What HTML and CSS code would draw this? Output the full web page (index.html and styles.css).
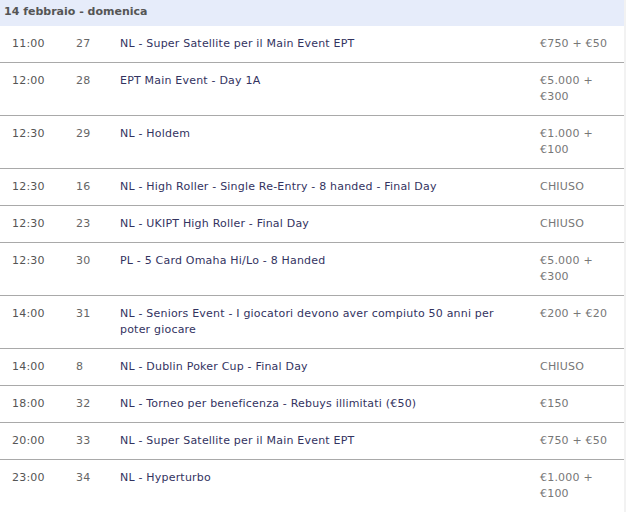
FILE: index.html
```html
<!DOCTYPE html>
<html lang="it">
<head>
<meta charset="utf-8">
<link rel="stylesheet" href="styles.css">
</head>
<body>
<div class="schedule">
  <div class="day">14 febbraio - domenica</div>
  <div class="row"><div class="time">11:00</div><div class="num">27</div><div class="event">NL - Super Satellite per il Main Event EPT</div><div class="price">€750 + €50</div></div>
  <div class="row"><div class="time">12:00</div><div class="num">28</div><div class="event">EPT Main Event - Day 1A</div><div class="price">€5.000 + €300</div></div>
  <div class="row"><div class="time">12:30</div><div class="num">29</div><div class="event">NL - Holdem</div><div class="price">€1.000 + €100</div></div>
  <div class="row"><div class="time">12:30</div><div class="num">16</div><div class="event">NL - High Roller - Single Re-Entry - 8 handed - Final Day</div><div class="price">CHIUSO</div></div>
  <div class="row"><div class="time">12:30</div><div class="num">23</div><div class="event">NL - UKIPT High Roller - Final Day</div><div class="price">CHIUSO</div></div>
  <div class="row"><div class="time">12:30</div><div class="num">30</div><div class="event">PL - 5 Card Omaha Hi/Lo - 8 Handed</div><div class="price">€5.000 + €300</div></div>
  <div class="row"><div class="time">14:00</div><div class="num">31</div><div class="event">NL - Seniors Event - I giocatori devono aver compiuto 50 anni per poter giocare</div><div class="price">€200 + €20</div></div>
  <div class="row"><div class="time">14:00</div><div class="num">8</div><div class="event">NL - Dublin Poker Cup - Final Day</div><div class="price">CHIUSO</div></div>
  <div class="row"><div class="time">18:00</div><div class="num">32</div><div class="event">NL - Torneo per beneficenza - Rebuys illimitati (€50)</div><div class="price">€150</div></div>
  <div class="row"><div class="time">20:00</div><div class="num">33</div><div class="event">NL - Super Satellite per il Main Event EPT</div><div class="price">€750 + €50</div></div>
  <div class="row"><div class="time">23:00</div><div class="num">34</div><div class="event">NL - Hyperturbo</div><div class="price">€1.000 + €100</div></div>
</div>
</body>
</html>
```
FILE: styles.css
```css
html, body {
  margin: 0;
  padding: 0;
}
body {
  background: #f2f2f2;
  font-family: "DejaVu Sans", Verdana, sans-serif;
  font-size: 11px;
  line-height: 16px;
}
.schedule {
  width: 624px;
  background: #ffffff;
}
.day {
  height: 26px;
  box-sizing: border-box;
  padding: 4px 4px 0 4px;
  background: #e6ecfa;
  color: #555555;
  font-weight: bold;
  font-size: 11px;
  line-height: 16px;
}
.row {
  display: grid;
  grid-template-columns: 64px 44px 420px 96px;
  border-bottom: 1px solid #a9a9a9;
  letter-spacing: 0.2px;
}
.row > div {
  padding: 10px 12px 10px 12px;
}
.time {
  color: #555555;
}
.num {
  color: #666666;
}
.event {
  color: #33335f;
}
.price {
  color: #777777;
}
```
